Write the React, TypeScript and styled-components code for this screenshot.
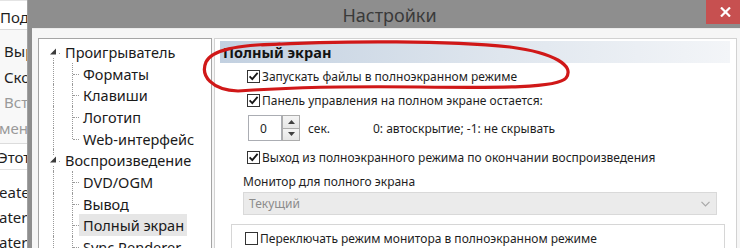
import React from 'react';
import styled, { createGlobalStyle } from 'styled-components';

const GlobalStyle = createGlobalStyle`
    html, body {
        margin: 0;
        padding: 0;
    }
    body {
        width: 740px;
        height: 248px;
        overflow: hidden;
        background: #fff;
        font-family: "Noto Sans", "Open Sans", sans-serif;
    }
`;

const Screen = styled.div`
    position: relative;
    display: flex;
    width: 740px;
    height: 248px;
    overflow: hidden;
`;

/* the explorer window that sits behind the dialog */
const BackWindow = styled.div`
    width: 27px;
    flex: none;
    display: flex;
    flex-direction: column;
    border-right: 1px solid #a2a2a2;
    background: #fff;
    overflow: hidden;
    font-size: 15px;
    color: #1e1e1e;
    white-space: nowrap;
`;

const BackTabs = styled.div`
    height: 30px;
    flex: none;
    border-top: 1px solid #e4e4e4;
    border-bottom: 1px solid #dadada;
    box-sizing: border-box;
    padding-top: 5px;
`;

const BackRibbon = styled.div`
    height: 114px;
    flex: none;
    box-sizing: border-box;
    padding-top: 9px;
    background: #f8f8f8;
    border-bottom: 1px solid #dcdcdc;
`;

const BackAddress = styled.div`
    height: 26px;
    flex: none;
    box-sizing: border-box;
    border-bottom: 1px solid #e2e2e2;
`;

const BackList = styled.div`
    padding-top: 10px;
`;

const BackItem = styled.div<{ $muted?: boolean; $shift?: number; $h?: number }>`
    height: ${p => p.$h ?? 25.5}px;
    line-height: ${p => p.$h ?? 25.5}px;
    margin-left: ${p => p.$shift ?? 0}px;
    color: ${p => (p.$muted ? '#9a9a9a' : '#1e1e1e')};
`;

const Dialog = styled.div`
    flex: 1;
    display: flex;
    flex-direction: column;
    background: #8e8e8e;
    padding-left: 4px;
    min-width: 0;
`;

const TitleBar = styled.div`
    height: 28px;
    flex: none;
    display: flex;
    align-items: flex-start;
`;

const TitleText = styled.div`
    flex: 1;
    padding-left: 41px;
    text-align: center;
    font-size: 18px;
    line-height: 30px;
    color: #3a3a3a;
`;

const CloseButton = styled.div`
    width: 34px;
    height: 24px;
    background: #c75050;
    display: flex;
    align-items: center;
    justify-content: center;
    padding-left: 4px;
    box-sizing: border-box;
`;

const Body = styled.div`
    flex: 1;
    display: flex;
    gap: 2px;
    padding: 9px 3px 0 6px;
    background: #f6f6f6;
    border-top: 1px solid #ececec;
    min-height: 0;
`;

const TreePanel = styled.div`
    width: 174px;
    flex: none;
    box-sizing: border-box;
    border: 1px solid #a5a5a5;
    border-bottom: none;
    background: #fff;
    padding: 2px 0 0 5px;
    font-size: 14.5px;
    color: #1a1a1a;
    overflow: hidden;
`;

const TreeRow = styled.div`
    display: flex;
    align-items: center;
    height: 21.7px;
    white-space: nowrap;
`;

const dots = '1px dotted #9a9a9a';

const RootGutter = styled.div<{ $first?: boolean }>`
    position: relative;
    width: 17px;
    height: 100%;
    flex: none;
    display: flex;
    align-items: center;

    &::before {
        content: '';
        display: ${p => (p.$first ? 'none' : 'block')};
        position: absolute;
        left: 9px;
        top: 0;
        height: calc(50% - 5px);
        border-left: ${dots};
    }
    &::after {
        content: '';
        position: absolute;
        left: 9px;
        top: calc(50% + 6px);
        bottom: 0;
        border-left: ${dots};
    }
`;

const LineCell = styled.div<{ $w: number; $branch?: boolean; $end?: boolean }>`
    position: relative;
    width: ${p => p.$w}px;
    height: 100%;
    flex: none;

    &::before {
        content: '';
        position: absolute;
        left: 9px;
        top: 0;
        height: ${p => (p.$end ? '50%' : '100%')};
        border-left: ${dots};
    }
    &::after {
        content: '';
        display: ${p => (p.$branch ? 'block' : 'none')};
        position: absolute;
        left: 10px;
        right: 0;
        top: 50%;
        border-top: ${dots};
    }
`;

const TreeLabel = styled.span<{ $selected?: boolean }>`
    padding: 0 3px 0 4px;
    height: 22px;
    line-height: 22px;
    background: ${p => (p.$selected ? '#e6e6e6' : 'transparent')};
`;

const Page = styled.div`
    flex: 1;
    box-sizing: border-box;
    border: 1px solid #d2d2d2;
    border-bottom: none;
    background: #fff;
    padding: 2px 6px 0 5px;
    font-size: 12px;
    color: #1e1e1e;
    display: flex;
    flex-direction: column;
    white-space: nowrap;
    min-width: 0;
`;

const PageHeader = styled.div`
    height: 22px;
    flex: none;
    padding-left: 3px;
    line-height: 22px;
    font-size: 14.5px;
    font-weight: 700;
    color: #141414;
    background: linear-gradient(to right, #c2d0e0, #dfe6ee 55%, #f3f5f8);
`;

const Row = styled.div<{ $mt: number; $indent: number; $h?: number }>`
    display: flex;
    align-items: center;
    flex: none;
    height: ${p => p.$h ?? 20}px;
    margin-top: ${p => p.$mt}px;
    margin-left: ${p => p.$indent}px;
`;

const BoxFrame = styled.span`
    width: 13px;
    height: 13px;
    flex: none;
    box-sizing: border-box;
    border: 1px solid #333;
    background: #fff;
    display: flex;
    align-items: center;
    justify-content: center;
    margin-right: 2px;
`;

const SpinEdit = styled.div`
    width: 34px;
    height: 26px;
    box-sizing: border-box;
    border: 1px solid #abadb3;
    display: flex;
    align-items: center;
    justify-content: center;
    padding-right: 3px;
`;

const SpinButtons = styled.div`
    width: 18px;
    height: 26px;
    display: flex;
    flex-direction: column;
`;

const SpinButton = styled.div`
    flex: 1;
    box-sizing: border-box;
    border: 1px solid #acacac;
    background: linear-gradient(#f4f4f4, #e6e6e6);
    display: flex;
    align-items: center;
    justify-content: center;
    & + & {
        border-top: none;
    }
`;

const Unit = styled.span`
    width: 65px;
    margin-left: 8px;
`;

const Combo = styled.div`
    height: 23px;
    flex: none;
    margin: 2px 13px 0 23px;
    box-sizing: border-box;
    border: 1px solid #d9d9d9;
    background: #ebebeb;
    color: #8c8c8c;
    display: flex;
    align-items: center;
    justify-content: space-between;
    padding: 0 6px 0 5px;
`;

const GroupBox = styled.div`
    flex: 1;
    margin: 9px 5px 0 11px;
    border: 1px solid #d6d6d6;
    border-bottom: none;
    padding: 3px 0 0 13px;
`;

const Scribble = styled.svg`
    position: absolute;
    left: 0;
    top: 0;
    pointer-events: none;
`;

const Checkbox = ({ checked }: { checked?: boolean }) => (
    <BoxFrame>
        {checked && (
            <svg width="11" height="11" viewBox="0 0 11 11">
                <path d="M1.6 5.4 L4.3 8.2 L9.6 1.9" fill="none" stroke="#161616" strokeWidth="1.8" />
            </svg>
        )}
    </BoxFrame>
);

type TreeItem = { label: string; root?: boolean; first?: boolean; last?: boolean; selected?: boolean };

const tree: TreeItem[] = [
    { label: 'Проигрыватель', root: true, first: true },
    { label: 'Форматы' },
    { label: 'Клавиши' },
    { label: 'Логотип' },
    { label: 'Web-интерфейс', last: true },
    { label: 'Воспроизведение', root: true },
    { label: 'DVD/OGM' },
    { label: 'Вывод' },
    { label: 'Полный экран', selected: true },
    { label: 'Sync Renderer' },
];

const App = () => (
    <Screen>
        <GlobalStyle />
        <BackWindow>
            <BackTabs>
                <BackItem $h={22}>Поде</BackItem>
            </BackTabs>
            <BackRibbon>
                <BackItem $shift={4}>Выре</BackItem>
                <BackItem $shift={4}>Скоп</BackItem>
                <BackItem $shift={4} $muted>Вста</BackItem>
                <BackItem $shift={-1} $muted>мена</BackItem>
            </BackRibbon>
            <BackAddress>
                <BackItem $shift={-2} $h={26}>Этот</BackItem>
            </BackAddress>
            <BackList>
                <BackItem $shift={-1} $h={25}>eater</BackItem>
                <BackItem $shift={-1} $h={25}>ater-</BackItem>
                <BackItem $shift={-1} $h={25}>ater-</BackItem>
            </BackList>
        </BackWindow>

        <Dialog>
            <TitleBar>
                <TitleText>Настройки</TitleText>
                <CloseButton>
                    <svg width="11" height="10" viewBox="0 0 11 10">
                        <path d="M1 0.5 L10 9.5 M10 0.5 L1 9.5" stroke="#fff" strokeWidth="2.2" />
                    </svg>
                </CloseButton>
            </TitleBar>
            <Body>
                <TreePanel>
                    {tree.map(item => (
                        <TreeRow key={item.label}>
                            {item.root ? (
                                <RootGutter $first={item.first}>
                                    <svg width="17" height="8" viewBox="0 0 17 8">
                                        <polygon points="12,0.5 12,6.5 6,6.5" fill="#3c3c3c" />
                                        <rect x="15" y="5" width="1" height="1" fill="#9a9a9a" />
                                    </svg>
                                </RootGutter>
                            ) : (
                                <>
                                    <LineCell $w={19} />
                                    <LineCell $w={16} $branch $end={item.last} />
                                </>
                            )}
                            <TreeLabel $selected={item.selected}>{item.label}</TreeLabel>
                        </TreeRow>
                    ))}
                </TreePanel>

                <Page>
                    <PageHeader>Полный экран</PageHeader>
                    <Row $mt={3} $indent={27}>
                        <Checkbox checked />
                        Запускать файлы в полноэкранном режиме
                    </Row>
                    <Row $mt={4} $indent={27}>
                        <Checkbox checked />
                        Панель управления на полном экране остается:
                    </Row>
                    <Row $mt={5} $indent={28} $h={26}>
                        <SpinEdit>0</SpinEdit>
                        <SpinButtons>
                            <SpinButton>
                                <svg width="7" height="4" viewBox="0 0 7 4">
                                    <polygon points="0,4 3.5,0 7,4" fill="#404040" />
                                </svg>
                            </SpinButton>
                            <SpinButton>
                                <svg width="7" height="4" viewBox="0 0 7 4">
                                    <polygon points="0,0 3.5,4 7,0" fill="#404040" />
                                </svg>
                            </SpinButton>
                        </SpinButtons>
                        <Unit>сек.</Unit>
                        0: автоскрытие; -1: не скрывать
                    </Row>
                    <Row $mt={6} $indent={27}>
                        <Checkbox checked />
                        Выход из полноэкранного режима по окончании воспроизведения
                    </Row>
                    <Row $mt={5} $indent={23} $h={18}>
                        Монитор для полного экрана
                    </Row>
                    <Combo>
                        Текущий
                        <svg width="9" height="6" viewBox="0 0 9 6">
                            <polyline points="0.5,0.8 4.5,4.8 8.5,0.8" fill="none" stroke="#a8a8a8" strokeWidth="1.2" />
                        </svg>
                    </Combo>
                    <GroupBox>
                        <Row $mt={0} $indent={0} $h={20}>
                            <Checkbox />
                            Переключать режим монитора в полноэкранном режиме
                        </Row>
                    </GroupBox>
                </Page>
            </Body>
        </Dialog>

        <Scribble width="740" height="248" viewBox="0 0 740 248">
            <path
                d="M262 45 C350 40, 450 41, 510 47 C555 53, 575 66, 566 78 C558 88, 500 88, 420 87 C340 86, 280 88, 238 91 C212 90, 200 76, 206 62 C212 50, 236 45, 280 44"
                fill="none"
                stroke="#d01818"
                strokeWidth="3.2"
                strokeLinecap="round"
            />
        </Scribble>
    </Screen>
);

export default App;
